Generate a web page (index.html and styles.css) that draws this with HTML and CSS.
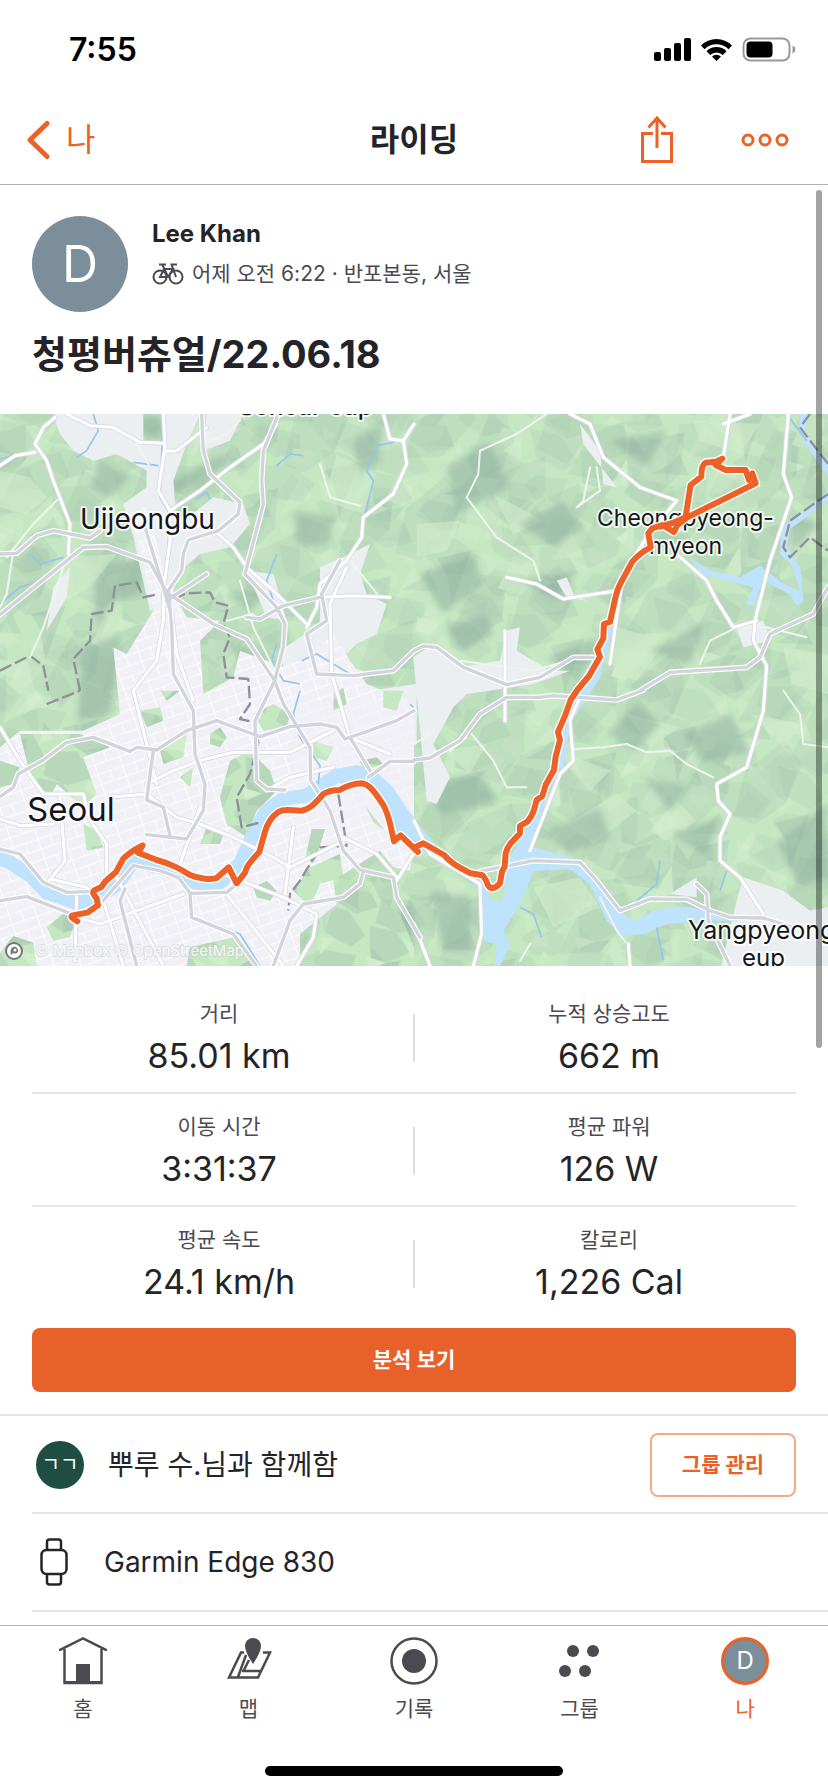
FILE: index.html
```html
<!DOCTYPE html>
<html lang="ko">
<head>
<meta charset="utf-8">
<meta name="viewport" content="width=device-width, initial-scale=1">
<title>라이딩</title>
<link rel="stylesheet" href="styles.css">
</head>
<body>
<div class="status">
  <span class="clock">7:55</span>
  <svg class="status-icons" width="142" height="26" viewBox="0 0 142 26" aria-hidden="true">
    <rect x="0" y="15" width="7" height="9" rx="2"/><rect x="10" y="11" width="7" height="13" rx="2"/><rect x="20" y="6" width="7" height="18" rx="2"/><rect x="30" y="1" width="7" height="23" rx="2"/>
    <path d="M47 8.500a22 22 0 0 1 31 0l-3.500 3.700a17 17 0 0 0-24 0zM52.500 14.300a14 14 0 0 1 20 0l-3.700 3.700a9 9 0 0 0-12.600 0zM58 19.500a6.500 6.500 0 0 1 9 0L62.500 24z"/>
    <rect x="89.500" y="1.500" width="46" height="22" rx="7" fill="none" stroke="#999" stroke-width="2"/>
    <rect x="92.500" y="4.500" width="26" height="16" rx="4"/>
    <path d="M138.500 8.500q3 1.500 3 4t-3 4z" fill="#999"/>
  </svg>
</div>
<header class="nav">
  <button class="back" type="button">
    <svg width="26" height="40" viewBox="0 0 26 40" aria-hidden="true"><path d="M21 3.500 4 20l17 16.500" fill="none" stroke="currentColor" stroke-width="5" stroke-linecap="round" stroke-linejoin="round"/></svg>
    <span>나</span>
  </button>
  <h1>라이딩</h1>
  <div class="nav-actions">
    <button type="button" aria-label="공유">
      <svg width="34" height="50" viewBox="0 0 34 50" fill="none" stroke="currentColor" stroke-width="3" aria-hidden="true"><path d="M13 18.500H2.500v28h29v-28H21M17 33V4M8.500 12.500 17 3l8.500 9.500"/></svg>
    </button>
    <button type="button" aria-label="더 보기">
      <svg width="50" height="16" viewBox="0 0 50 16" fill="none" stroke="currentColor" stroke-width="3" aria-hidden="true"><circle cx="8" cy="8" r="5"/><circle cx="25" cy="8" r="5"/><circle cx="42" cy="8" r="5"/></svg>
    </button>
  </div>
</header>
<div class="scrollbar" aria-hidden="true"></div>
<main>
  <section class="summary">
    <div class="athlete">
      <span class="avatar">D</span>
      <div>
        <p class="name">Lee Khan</p>
        <p class="meta">
          <svg width="32" height="24" viewBox="0 0 32 24" fill="none" stroke="currentColor" stroke-width="2" aria-hidden="true"><circle cx="8" cy="15" r="6.500"/><circle cx="24" cy="15" r="6.500"/><path d="M8 15l4-8h9l-5 8zM10.500 3 16 15M7 2.500h7M24 15 19.500 2.500H25"/></svg>
          <span>어제 오전 6:22 · 반포본동, 서울</span>
        </p>
      </div>
    </div>
    <h2>청평버츄얼/22.06.18</h2>
  </section>

  <svg class="map" viewBox="0 0 828 552" role="img" aria-label="라이딩 경로 지도">
    <defs>
      <pattern id="terrain" width="420" height="390" patternUnits="userSpaceOnUse" patternTransform="rotate(24) scale(1.3 .8)">
        <rect width="420" height="390" fill="#c5e7c2"/>
        <g fill="#b8d8ba">
          <path d="M0 20 60 0 110 50 70 120 20 90zM140 30l90-30 20 60-50 60-70-20zM290 20l70-20 60 60-20 60-70-10zM30 170l80-30 40 60-50 60-70-20zM180 170l60-50 70 30-10 80-60 30-50-30zM350 170l70-30v90l-50 30-40-40zM0 300l60-40 60 60-50 70H10zM310 280l60-10 50 60-40 60-70-20z"/>
        </g>
        <g fill="#aecfb5">
          <path d="m20 90 50 30 30-30-10 70-40 20zM190 10l60 50-50 60-10-40zM110 140l40 60-80 50 40-50zM250 150l50 20-10 60-50 30zM210 270l40 60-80 50 30-60zM360 290l20 80-60-10z"/>
        </g>
        <g fill="#d1edcb">
          <path d="M80 10l50 10-10 50zM230 60l50-20 10 60-50 10zM20 130l50-10-30 50zM310 130l50-10-20 70zM120 250l60-20-10 60zM390 230l30 20-30 40zM110 340l40-10 10 60-50-10zM270 330l40 10-20 40z"/>
        </g>
      </pattern>
      <pattern id="terrain-cross" href="#terrain" patternTransform="translate(130 70) rotate(-52) scale(2.1 1.1)"/>
      <pattern id="streets" width="78" height="62" patternUnits="userSpaceOnUse" patternTransform="rotate(-19)">
        <rect width="78" height="62" fill="#f0f0f6"/>
        <path d="M0 3h78M4 0v62M42 3v32M0 35h78" fill="none" stroke="#fff" stroke-width="3"/>
      </pattern>
      <filter id="soft" x="-30%" y="-30%" width="160%" height="160%"><feGaussianBlur stdDeviation="9"/></filter>
      <g id="river">
        <path d="M-10 1330 30 1345 90 1385 140 1435 230 1467 300 1447 350 1412 400 1342 530 1370 590 1408 660 1405 720 1350 760 1260 800 1190 850 1155 920 1145 1010 1085 1070 1075 1110 1085 1160 1130 1200 1190 1260 1270 1290 1310" fill="none" stroke-width="42"/>
        <path d="M1030 1064 1090 1064 1140 1105 1242 1220V1300L1190 1260 1150 1150 1100 1100 1020 1110zM1390 1370 1450 1390 1500 1420 1530 1330 1590 1230 1640 1090 1680 920 1710 850 1800 700 1825 640 1840 640 1800 790 1710 930 1690 1060 1640 1140 1600 1300 1740 1340 1790 1390 1880 1510 1910 1520 1960 1490 2060 1478 2120 1490 2220 1520 2110 1520 2000 1530 1930 1560 1870 1565 1820 1520 1770 1410 1710 1365 1600 1370 1565 1460 1510 1550 1530 1590 1500 1656H1485L1490 1590 1450 1580 1445 1440z"/>
        <path d="M2070 430 2130 470 2220 490 2280 455 2350 510 2400 530 2375 450 2340 420 2345 340 2440 270 2484 230V260L2370 345 2360 400 2400 460 2410 560 2390 575 2370 540 2290 500 2260 575 2240 570 2260 520 2130 485 2110 490zM2400 0h25l-10 55 69 90v45L2400 60z"/>
      </g>
      <g id="highways">
        <path d="M0 420 50 418 110 365 160 350 270 372 300 350M0 602 250 400 320 398 450 445 500 535 640 630 740 675 824 800 850 870 930 1000 932 1100 990 1190 1030 1310 1080 1368 1180 1390 1190 1450 1260 1570"/>
        <path d="M605 0 610 110 630 180 720 265 715 300 655 350 565 378 550 420 545 470 505 530 515 640 520 780 580 890 585 1020 615 1110 610 1190 560 1275 440 1262M835 0 790 110 785 200 790 270 735 480 830 580 855 630 850 700 824 800 765 920 770 1100 800 1125 855 1128M740 610 780 615 850 575 960 550M1020 440 965 540 980 620 920 660 950 780 1060 785 1180 770 1242 710 1270 696 1310 700 1390 760 1520 812 1620 790 1720 730 1780 730M0 1148 40 1120 55 1080 130 1038 200 985 280 970 390 1012 410 1000 470 1008 560 950 650 920 780 968 870 938 960 930 1010 940 1035 975 1085 958 1190 920 1242 890M460 1010 440 1158 490 1180 510 1265M0 1460 80 1448 215 1500M0 1305 60 1320 130 1405 200 1435 280 1432M310 1460 400 1355 480 1370 535 1390 570 1438 680 1435 730 1395M570 1440 575 1510 700 1560 770 1656M820 1656 870 1520 910 1470 1030 1450 1080 1410 1090 1370M1242 1038 1290 1032 1380 980 1440 900 1520 850 1620 850 1660 845 1850 858 1930 828M1440 1372 1600 1340 1740 1345 1790 1400 1860 1490 1950 1455 2060 1456 2130 1490 2190 1510 2290 1512 2380 1540M1920 830 2010 775 2240 760 2280 730 2310 660 2440 600 2484 520M2090 1410 2120 1440 2125 1520 2190 1656M435 340 490 520 510 590M375 1425 360 1460 410 1656M1050 970 1110 1070M1105 1090 1170 1042H1242M500 560 620 480"/>
      </g>
      <g id="roads">
        <path d="M490 0 495 100 475 230 510 290M495 88 420 85 340 40 270 35 200 0M165 10 130 40 105 90 140 140 160 200 210 330 205 420M0 155 45 125 105 115M495 112 530 110 620 40M830 30 790 90 690 160 600 230 510 290 510 380 490 530 490 620 470 740 400 830M1150 0 1170 75 1210 80 1220 150 1180 240 1090 310 1085 370 1040 440 960 510 950 580 920 640M655 360 700 400 740 460 820 530 920 630M960 550 1060 545 1170 550M1040 460 990 570 995 780 1050 970 1170 1020M515 600 530 720 580 860M400 830 440 990 470 1110M0 940 60 1040 130 1140M180 1150 195 1340 140 1410M130 1140 250 1140 270 1220 320 1290 320 1380M150 1395 260 1420 300 1450M230 1448 225 1640M230 1510 300 1530 550 1440M440 1110 520 1070 600 1040 700 1015 870 1015 1000 950M600 1230 700 1270 820 1330 870 1360 1040 1275M670 1380 850 1450 950 1500 940 1570 890 1656M330 1150 440 1140 530 1210 600 1230M1030 1270 1130 1320 1190 1390M1190 1400 1240 1320M310 1460 370 1656M680 1440 850 1656M800 1130 870 1090 1000 1060M600 1180 540 1350M350 1390 490 1656M880 1240 855 1440M0 1215 60 1235 160 1230M1242 30 1210 80"/>
        <path d="M1710 0 1770 30 1810 130 1920 220 2030 260 1940 370 1870 480 1850 610 1830 750M2190 0 2170 130M2170 30 2250 0M2365 0 2350 180 2375 250 2310 440 2265 620 2260 680 2300 755 2290 890 2240 1060 2150 1110 2155 1160 2190 1200 2160 1270 2160 1340 2220 1390 2290 1500M2030 420 2120 500 2150 560 2200 640 2270 620M1520 490 1610 510 1690 555 1850 530M1242 1220 1290 1320 1440 1410 1445 1560 1420 1656M1242 1530 1290 1656M1740 850 1710 920 1720 1040 1680 1080 1590 1310M1885 1590 1890 1656M1515 650V920"/>
      </g>
      <g id="route">
        <path d="M232 1522Q206 1508 218 1504L262 1496 294 1474 290 1453Q272 1434 285 1428L303 1420 318 1400 348 1374 370 1334Q380 1324 406 1306L428 1294 414 1316 470 1338Q500 1346 525 1358T570 1383Q590 1392 615 1394T650 1392L686 1360 710 1408 735 1376Q738 1364 745 1353T778 1314L795 1253Q800 1236 810 1220T835 1194Q845 1188 860 1188T905 1190Q920 1188 935 1176T970 1140Q990 1128 1020 1128Q1030 1120 1050 1114T1085 1108Q1098 1110 1110 1120T1150 1173Q1160 1190 1170 1228L1182 1282 1202 1264 1254 1314 1248 1298 1270 1288 1332 1323Q1344 1338 1362 1350T1412 1378L1447 1384Q1456 1392 1464 1414Q1472 1424 1480 1422T1500 1408L1506 1373 1514 1358 1517 1318Q1522 1300 1532 1288L1560 1258 1560 1236 1582 1223Q1594 1210 1602 1188L1610 1158 1627 1146 1637 1113 1662 1068 1667 1028 1680 978 1674 954 1694 908 1712 858 1732 828 1767 786 1800 728 1792 706 1810 673 1812 630 1830 624 1847 548Q1852 524 1864 503T1897 443Q1920 416 1952 400L1945 358 1957 343 1987 333 2022 354 2032 333 2062 310 2267 208 2257 178 2247 198 2237 168 2177 168 2147 153 2167 134 2147 143 2117 146Q2104 152 2104 188L2072 213 2060 288 2057 310 2020 326 1982 338"/>
      </g>
    </defs>

    <g transform="scale(.33333)">
      <rect width="2484" height="1656" fill="url(#terrain)"/>
      <rect width="2484" height="1656" fill="url(#terrain-cross)" opacity=".55"/>
      <g fill="#d1edcb" opacity=".6">
        <path d="M0 170l90 20 50 60-60 50-80-20zM520 30l130-10-60 80zM1010 120l120 60-40 120-120-40zM200 430l150-10-80 100-110 60zM1250 330l130-10-40 90-90 20zM1480 240l150 80-90 40zM2080 20l200 10-60 90-120-40zM1850 640l150 40-90 120-70-20zM2350 700l134 20v120l-110-30zM1650 1000l180 70-60 60zM1880 900l160 40-90 60zM1700 1230l150-90 60 50-130 100zM2250 900l160 30-60 70zM1600 1420l140-30 60 90-140 60zM1330 1010l130-20-50 90zM1950 1250l80-90 60 60-90 60z"/>
      </g>
      <g fill="#8aac9c" opacity=".5" filter="url(#soft)">
        <path d="M380 10 490 10 480 70 400 60zM300 130l90 60-60 60-60-30zM1060 80l90-60-10 130-60 30zM880 290l130 20-30 80-80 10zM250 700l110-40-30 240-100 30zM280 510l50-60 110-20-20 110-80 20-50 80zM500 210l150-80 50-10-80 90-110 30zM680 540l130-10-60 60zM690 680l90 50-40 70zM700 1060l100 20-20 130-80 20zM1340 150l130-60 60 130-160 80zM1560 500l170-30-60 90zM1640 730l160-60-60 130zM1830 80l170-30-60 110zM1950 710l170-90-50 130zM2380 300l80 30-80 80zM1280 1100l160-20 60 80-180 40zM1640 1250l160-70 30 90-130 50zM2050 960l140-60 60 110-140 40zM2330 1290l150-120v220l-80 30zM1290 1430l120 20v160h-80zM2010 1260l150-50-40 110zM1110 1560l130-100v150zM1260 480l160-60 30 90-120 90zM1560 330l130-70 60 80-90 60zM1820 960l90-90 70 60-70 80zM1930 1090l140 30-60 70zM1340 640l120-40 20 60-100 50z"/>
      </g>
      <g fill="#eceff2">
        <path d="M160 0h270v80l60 10V0h110l-40 90-40 110 10 120 60-30 50-40 90 20 20 60-60 70-90 20-70 60-20 100-60 10-30-130-20-90-30-100 70-50v-50l-90-50-70 20-60-30-40-50zM960 460l70-30 80-40-30 90 20 60 60 30-30 90-60 30-60 60 80 20-50 70 210-30v180l-120 30-130-20-120-90-40-200 120-80zM620 0h110l-40 80-80 30zM740 470l80 10 40 140-60-10zM1240 730l60-40 80 70 120-20 20-90 40-10-10 70 100 60 60 0-110 40-130 20-70 10-40 40-60 110 50 100-40 80-30-10zM1670 500l30-10 20 50 40 20-60-10zM2230 1390l120 40 80 60 54-10v176h-320l30-130 20-80zM2210 640l80-20 20 60-80 20zM2010 1440l80-50v60zM160 520l50-60-10 90-60 100zM1740 30l60 80 10 100 40 10-100-130z"/>
      </g>
      <path fill="url(#streets)" d="M0 1000 60 950H250L360 900 340 700 380 720 460 590 430 450 390 300 440 280 500 500 560 610 660 620 600 680 610 840 700 790 720 710 850 760 920 730 1000 660 1050 740 1100 810 1242 870V1250L1230 1370 1180 1360 1140 1310 1000 1400 1010 1470 900 1560 900 1656H0z"/>
      <path fill="#f0f0f6" opacity=".6" d="M860 860h380v360H960l-80-80z"/>
      <g fill="url(#terrain)">
        <path d="M0 1040 60 1060 40 1110 0 1120zM60 960 240 960 330 1000 250 1030 290 1140 250 1180 170 1110 150 1150 90 1080zM250 1230 290 1250 310 1300 260 1310zM480 830 540 830 500 860zM420 890 480 880 490 920 440 940zM480 1010 560 960 550 1030 490 1050zM630 960 660 940 680 970 660 1000 630 990zM540 1090 580 1060 570 1120zM760 900l60-30 50 30-10 40-70 10zM690 1040l60-30 60 60 20 60-60 60-30 80-60-40-20-80zM935 1245h40l-30 100-30-10zM880 1430l50-70 90-40 10 70-70 20-30 70zM760 1420l40-20 30 30-20 30-40-10zM140 1540l60-50 30 20-20 60-50 10zM620 1240l50 20-10 30-60 0zM570 1600l130-30 60 86H560zM1000 840l30-20 10 50-40 20zM1150 830h60l-20 60-40-10zM940 980l60 20-20 40-40-10zM1080 1040l50-10 20 20-60 20zM0 1656v-40l40-50 60 20 10 70z"/>
        <path d="M950 1656 990 1500 1050 1420 1120 1440 1200 1500 1242 1600V1656z"/>
      </g>

      <use href="#river" fill="#bfe2fd" stroke="#bfe2fd" stroke-linejoin="round"/>
      <path d="M1460 1440l60-30-15 50-25 5zM1095 1175l60 75-35-25z" fill="#c4e6c1"/>
      <path d="M490 0 480 250 510 300 500 470M900 830 880 900 900 970 960 1055 955 1110M280 0 295 50 260 110 230 130M400 145 475 155M590 255 620 235 630 255M830 155 870 120 910 125M1180 85 1130 95 1100 170 1120 200 1095 300M0 570 60 520 90 510M90 420 120 450 190 430M830 420 800 500 820 560M905 740 950 720 1050 780 1120 790M830 690 815 740 850 800 900 810M2360 0 2420 80M0 135 40 125M1980 1340 1970 1410 1900 1470M2180 1370 2160 1430M1560 1480 1600 1500 1625 1570M1970 1540 1990 1640M640 1530 720 1560 780 1656M1230 870 1240 880" fill="none" stroke="#94c6ef" stroke-width="5"/>

      <g fill="none" stroke="#8f909c" stroke-width="7" stroke-dasharray="38 12" stroke-linejoin="round">
        <path d="M0 770 90 725 130 755 145 830M240 830 220 735 270 680 275 600 335 590 345 515 410 505 430 550 475 540M520 555 560 538 630 535 645 565 685 575 670 630 690 670 670 720 680 790 745 795 750 870 720 915 765 925 775 985 750 1080 710 1150 725 1240 780 1225M1015 1140 1040 1295 960 1300 900 1400 870 1440 865 1490M140 870 240 830"/>
        <path d="M2430 0 2400 40 2484 150M2484 240 2370 320 2350 400 2370 430 2430 370 2484 410"/>
      </g>

      <g fill="none" stroke-linejoin="round" stroke-linecap="round">
        <path d="M400 70 450 160M40 410 20 540 0 580M180 250 100 330 20 430M190 460 130 640 90 730M720 500 760 640 820 760M960 150 990 250 1080 275M1050 440 1140 550M620 85 680 60 720 20M680 620 760 600M1640 0 1550 60 1440 110 1435 180 1400 250 1490 370 1600 440 1620 500M1770 160 1750 260 1730 280 1800 230 1790 160M1720 1005 1810 1000 1880 990 1940 1015 2010 1010 2060 1050 2140 1090M1415 960 1480 1040 1520 1120 1580 1120M2100 750 2130 680 2210 640 2300 640 2420 670M1400 970 1350 1010M1590 1590 1560 1640M1800 1450 1850 1550 1890 1600M2350 830 2400 900 2410 990 2484 1000M1242 990 1290 960M1380 740 1600 770 1740 730" stroke="#eef5ee" stroke-width="6"/>
        <use href="#roads" stroke="#d9dae3" stroke-width="14"/>
        <use href="#roads" stroke="#fff" stroke-width="9"/>
        <use href="#highways" stroke="#fff" stroke-width="17"/>
        <use href="#highways" stroke="#d2d3dc" stroke-width="10"/>
      </g>
    </g>

    <g class="map-labels">
      <text x="239" y="1" font-size="24" font-weight="500">Soheul-eup</text>
      <text x="80" y="115" font-size="28">Uijeongbu</text>
      <text x="27" y="407" font-size="33">Seoul</text>
      <text x="597" y="112" font-size="23">Cheongpyeong-</text>
      <text x="649" y="140" font-size="23">myeon</text>
      <text x="688" y="525" font-size="25">Yangpyeong-</text>
      <text x="742" y="552" font-size="24">eup</text>
    </g>

    <g transform="scale(.33333)" fill="none" stroke-linejoin="round" stroke-linecap="round">
      <use href="#route" stroke="#fff" stroke-width="26"/>
      <use href="#route" stroke="#ec6128" stroke-width="18"/>
    </g>

    <circle cx="14" cy="537" r="8" fill="#fff" stroke="#777" stroke-width="2"/>
    <path d="M11 541c-2-7 3-10 6-7s0 7-4 5z" fill="#777"/><circle cx="15" cy="536" r="1.500" fill="#fff"/>
    <text class="map-credit" x="35" y="542">© Mapbox © OpenStreetMap</text>
  </svg>

  <section class="stats">
    <dl>
      <div><dt>거리</dt><dd>85.01 km</dd></div>
      <div><dt>누적 상승고도</dt><dd>662 m</dd></div>
      <div><dt>이동 시간</dt><dd>3:31:37</dd></div>
      <div><dt>평균 파워</dt><dd>126 W</dd></div>
      <div><dt>평균 속도</dt><dd>24.1 km/h</dd></div>
      <div><dt>칼로리</dt><dd>1,226 Cal</dd></div>
    </dl>
    <button class="primary" type="button">분석 보기</button>
  </section>

  <section class="details">
    <div class="row">
      <span class="group-avatar">ㄱㄱ</span>
      <p>뿌루 수.님과 함께함</p>
      <button class="outline" type="button">그룹 관리</button>
    </div>
    <div class="row device">
      <svg width="28" height="48" viewBox="0 0 28 48" fill="none" stroke="currentColor" stroke-width="2.500" aria-hidden="true"><rect x="1.500" y="12" width="25" height="24" rx="5"/><path d="M7 12V4q0-2.500 2.500-2.500h9Q21 1.500 21 4v8M7 36v8q0 2.500 2.500 2.500h9Q21 46.500 21 44v-8"/></svg>
      <p>Garmin Edge 830</p>
    </div>
  </section>
</main>
<nav class="tabs">
  <div class="tab-list">
    <a href="#home"><svg width="48" height="48" viewBox="0 0 48 48" aria-hidden="true"><path d="M1 14v-1L24 1.500 47 13v1M5.500 12v34h37V12" fill="none" stroke="currentColor" stroke-width="2.500"/><path d="M5 44h38v3H5zM17 27h14v18H17z"/></svg>홈</a>
    <a href="#maps"><svg width="48" height="48" viewBox="0 0 48 48" aria-hidden="true"><path d="M20 15.500h-3L5 40.500h29l12-25h-7M22 18 14 40M18 34h20M25 23l-5 10" fill="none" stroke="currentColor" stroke-width="2.500"/><path d="M29 27q-8-12-8-18a8 8 0 0 1 16 0q0 6-8 18z"/></svg>맵</a>
    <a href="#record"><svg width="48" height="48" viewBox="0 0 48 48" aria-hidden="true"><circle cx="24" cy="24" r="22.500" fill="none" stroke="currentColor" stroke-width="2.500"/><circle cx="24" cy="24" r="12"/></svg>기록</a>
    <a href="#groups"><svg width="48" height="48" viewBox="0 0 48 48" aria-hidden="true"><circle cx="17" cy="14" r="6"/><circle cx="37" cy="14" r="6"/><circle cx="9" cy="34" r="6"/><circle cx="29" cy="34" r="6"/></svg>그룹</a>
    <a class="current" href="#me" aria-current="page"><span class="tab-avatar">D</span>나</a>
  </div>
  <div class="home-indicator" aria-hidden="true"></div>
</nav>
</body>
</html>
```
FILE: styles.css
```css
* { box-sizing: border-box; }
body {
  margin: 0;
  min-height: 100vh;
  display: flex;
  flex-direction: column;
  position: relative;
  background: #fff;
  color: #242428;
  font-family: Inter, "Noto Sans CJK KR", sans-serif;
}
h1, h2, p, dl, dd { margin: 0; }
svg { display: block; flex: none; }
button { font: inherit; color: inherit; background: none; border: 0; padding: 0; cursor: pointer; }

.status {
  height: 94px;
  padding: 6px 32px 0 69px;
  display: flex;
  align-items: center;
  justify-content: space-between;
  color: #000;
}
.clock { font-size: 32px; font-weight: 600; line-height: 40px; }

.nav {
  height: 91px;
  padding: 2px 38px 0 26px;
  display: grid;
  grid-template-columns: 1fr auto 1fr;
  align-items: center;
  border-bottom: 1px solid #b2b2b4;
}
.back { display: flex; align-items: center; gap: 14px; justify-self: start; color: #ec6128; font-size: 32px; line-height: 40px; }
.nav h1 { margin-left: 12px; font-size: 32px; line-height: 40px; font-weight: 600; }
.nav-actions { display: flex; align-items: center; justify-content: flex-end; gap: 66px; color: #ec6128; }

.scrollbar { position: absolute; top: 190px; right: 6px; width: 6px; height: 858px; border-radius: 3px; background: rgba(0, 0, 0, .36); }

main { flex: 1; }
.summary { padding: 31px 32px 34px; }
.athlete { display: flex; gap: 24px; }
.avatar {
  width: 96px;
  height: 96px;
  border-radius: 50%;
  background: #7c8e99;
  color: #fff;
  font-size: 50px;
  display: grid;
  place-items: center;
}
.name { margin-top: 2px; font-size: 24px; line-height: 32px; font-weight: 700; }
.meta { margin-top: 8px; display: flex; align-items: center; gap: 8px; font-size: 21px; line-height: 32px; color: #4b4a50; }
.summary h2 { margin-top: 16px; font-size: 38px; line-height: 52px; font-weight: 700; }

.map { width: 100%; height: auto; }
.map-labels { fill: #15151a; stroke: #fff; stroke-width: 4px; stroke-opacity: .75; stroke-linejoin: round; paint-order: stroke; }
.map-credit { fill: #fff; fill-opacity: .8; stroke: #c3c6ca; stroke-width: 2px; stroke-opacity: .4; paint-order: stroke; font-size: 15px; }

.stats { padding: 15px 32px 22px; }
.stats dl { display: grid; grid-template-columns: 1fr 1fr; }
.stats dl div { position: relative; height: 113px; padding-top: 17px; text-align: center; }
.stats dl div:nth-child(odd) { padding-right: 8px; }
.stats dl div:nth-child(even) { padding-left: 8px; }
.stats dl div:nth-child(-n+4) { border-bottom: 2px solid #e4e4e9; }
.stats dl div:nth-child(odd)::after { content: ""; position: absolute; right: -1px; top: 33px; width: 2px; height: 48px; background: #dedee1; }
.stats dt { font-size: 21px; line-height: 32px; color: #4b4a50; }
.stats dd { font-size: 34px; line-height: 52px; }
.primary { width: 100%; height: 64px; margin-top: 8px; padding-bottom: 4px; border-radius: 8px; background: #e8602a; color: #fff; font-size: 21px; font-weight: 600; }

.details { border-top: 2px solid #e4e4e9; padding-left: 32px; }
.row { display: flex; align-items: center; height: 98px; padding: 2px 32px 0 4px; border-bottom: 2px solid #e4e4e9; font-size: 28px; line-height: 40px; }
.row p { flex: 1; margin-left: 24px; }
.group-avatar { width: 48px; height: 48px; border-radius: 50%; background: #1f4d41; color: #fff; font-size: 20px; display: grid; place-items: center; }
.outline { width: 146px; height: 64px; border: 2px solid #f4aa86; border-radius: 8px; color: #e8602a; font-size: 21px; font-weight: 700; }
.device { padding-left: 8px; padding-top: 0; }
.device p { margin-left: 36px; }

.tabs { position: sticky; bottom: 0; height: 167px; background: #fff; border-top: 1px solid #b2b2b4; display: flex; flex-direction: column; }
.tab-list { display: grid; grid-template-columns: repeat(5, 1fr); padding-top: 11px; }
.tab-list a { display: flex; flex-direction: column; align-items: center; gap: 8px; color: #4b4a50; font-size: 21px; line-height: 32px; text-decoration: none; }
.tab-list svg { fill: currentColor; }
.tab-list .current { color: #ec6128; }
.tab-avatar { width: 48px; height: 48px; border: 3px solid #ec6128; border-radius: 50%; background: #7c8e99; color: #fff; font-size: 24px; display: grid; place-items: center; }
.home-indicator { width: 36%; height: 10px; border-radius: 5px; background: #000; margin: auto auto 16px; }
```
